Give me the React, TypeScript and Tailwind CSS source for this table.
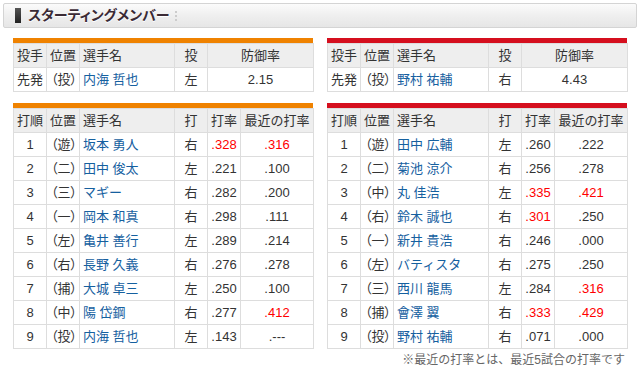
import React from "react";

type Bat = [string, string, string, string, string, boolean, string, boolean];

const left: Bat[] = [
  ["1", "（遊）", "坂本 勇人", "右", ".328", true, ".316", true],
  ["2", "（二）", "田中 俊太", "左", ".221", false, ".100", false],
  ["3", "（三）", "マギー", "右", ".282", false, ".200", false],
  ["4", "（一）", "岡本 和真", "右", ".298", false, ".111", false],
  ["5", "（左）", "亀井 善行", "左", ".289", false, ".214", false],
  ["6", "（右）", "長野 久義", "右", ".276", false, ".278", false],
  ["7", "（捕）", "大城 卓三", "左", ".250", false, ".100", false],
  ["8", "（中）", "陽 岱鋼", "右", ".277", false, ".412", true],
  ["9", "（投）", "内海 哲也", "左", ".143", false, ".---", false],
];

const right: Bat[] = [
  ["1", "（遊）", "田中 広輔", "左", ".260", false, ".222", false],
  ["2", "（二）", "菊池 涼介", "右", ".256", false, ".278", false],
  ["3", "（中）", "丸 佳浩", "左", ".335", true, ".421", true],
  ["4", "（右）", "鈴木 誠也", "右", ".301", true, ".250", false],
  ["5", "（一）", "新井 貴浩", "右", ".246", false, ".000", false],
  ["6", "（左）", "バティスタ", "右", ".275", false, ".250", false],
  ["7", "（三）", "西川 龍馬", "左", ".284", false, ".316", true],
  ["8", "（捕）", "會澤 翼", "右", ".333", true, ".429", true],
  ["9", "（投）", "野村 祐輔", "右", ".071", false, ".000", false],
];

const th = "h-[24px] border border-[#dddddd] bg-[#eeeeee] font-normal p-0 whitespace-nowrap";
const td = "h-[24px] border border-[#dddddd] bg-white p-0 whitespace-nowrap";
const pos = "pl-[4px] [font-feature-settings:'palt']";

function PitcherTable({ color, name, hand, era }: { color: string; name: string; hand: string; era: string }) {
  return (
    <div className="w-[300px]">
      <div className={`h-[5px] ${color}`} />
      <table className="w-[300px] table-fixed border-collapse text-[13px] text-[#333]">
        <colgroup>
          <col className="w-[33px]" />
          <col className="w-[33px]" />
          <col className="w-[95px]" />
          <col className="w-[33px]" />
          <col className="w-[106px]" />
        </colgroup>
        <thead>
          <tr>
            <th className={`${th} text-left pl-[3px]`}>投手</th>
            <th className={`${th} text-left pl-[3px]`}>位置</th>
            <th className={`${th} text-left pl-[3px]`}>選手名</th>
            <th className={`${th} text-center`}>投</th>
            <th className={`${th} text-center`}>防御率</th>
          </tr>
        </thead>
        <tbody>
          <tr>
            <td className={`${td} pl-[3px]`}>先発</td>
            <td className={`${td} ${pos}`}>（投）</td>
            <td className={`${td} pl-[3px] text-[#15609f]`}>{name}</td>
            <td className={`${td} text-center`}>{hand}</td>
            <td className={`${td} text-center`}>{era}</td>
          </tr>
        </tbody>
      </table>
    </div>
  );
}

function BatTable({ color, rows }: { color: string; rows: Bat[] }) {
  return (
    <div className="w-[300px]">
      <div className={`h-[5px] ${color}`} />
      <table className="w-[300px] table-fixed border-collapse text-[13px] text-[#333]">
        <colgroup>
          <col className="w-[33px]" />
          <col className="w-[33px]" />
          <col className="w-[95px]" />
          <col className="w-[33px]" />
          <col className="w-[33px]" />
          <col className="w-[73px]" />
        </colgroup>
        <thead>
          <tr>
            <th className={`${th} text-left pl-[3px]`}>打順</th>
            <th className={`${th} text-left pl-[3px]`}>位置</th>
            <th className={`${th} text-left pl-[3px]`}>選手名</th>
            <th className={`${th} text-center`}>打</th>
            <th className={`${th} text-center`}>打率</th>
            <th className={`${th} text-center`}>最近の打率</th>
          </tr>
        </thead>
        <tbody>
          {rows.map((r) => (
            <tr key={r[0]}>
              <td className={`${td} text-center`}>{r[0]}</td>
              <td className={`${td} ${pos}`}>{r[1]}</td>
              <td className={`${td} pl-[3px] text-[#15609f]`}>{r[2]}</td>
              <td className={`${td} text-center`}>{r[3]}</td>
              <td className={`${td} text-center ${r[5] ? "text-[#ff0000]" : ""}`}>{r[4]}</td>
              <td className={`${td} text-center ${r[7] ? "text-[#ff0000]" : ""}`}>{r[6]}</td>
            </tr>
          ))}
        </tbody>
      </table>
    </div>
  );
}

export default function App() {
  return (
    <div
      className="w-[640px] h-[371px] bg-white overflow-hidden"
      style={{ fontFamily: '"Liberation Sans", "Noto Sans CJK JP", sans-serif' }}
    >
      <div className="pt-[3px] px-[3px]">
        <div className="h-[25px] rounded-[2px] border border-[#d4d4d4] bg-linear-to-b from-[#fbfbfb] via-[#efefef] to-[#e6e6e6] flex items-center">
          <div className="ml-[11px] w-[6px] h-[15px] bg-linear-to-b from-[#555] to-[#222]" />
          <div className="ml-[7px] text-[14px] font-bold text-[#3a2a35] [font-feature-settings:'palt']" style={{ textShadow: "0 1px 0 #fff" }}>
            スターティングメンバー
          </div>
          <div className="ml-[5px] h-[10px] border-l-2 border-dotted border-[#cccccc]" />
        </div>
      </div>
      <div className="flex gap-[14px] px-[13px] mt-[10px]">
        <PitcherTable color="bg-[#ef8200]" name="内海 哲也" hand="左" era="2.15" />
        <PitcherTable color="bg-[#d50f1e]" name="野村 祐輔" hand="右" era="4.43" />
      </div>
      <div className="flex gap-[14px] px-[13px] mt-[11px]">
        <BatTable color="bg-[#ef8200]" rows={left} />
        <BatTable color="bg-[#d50f1e]" rows={right} />
      </div>
      <div className="pr-[15px] mt-[3px] text-right text-[12px] leading-[16px] text-[#666]">
        ※最近の打率とは、最近5試合の打率です
      </div>
    </div>
  );
}
